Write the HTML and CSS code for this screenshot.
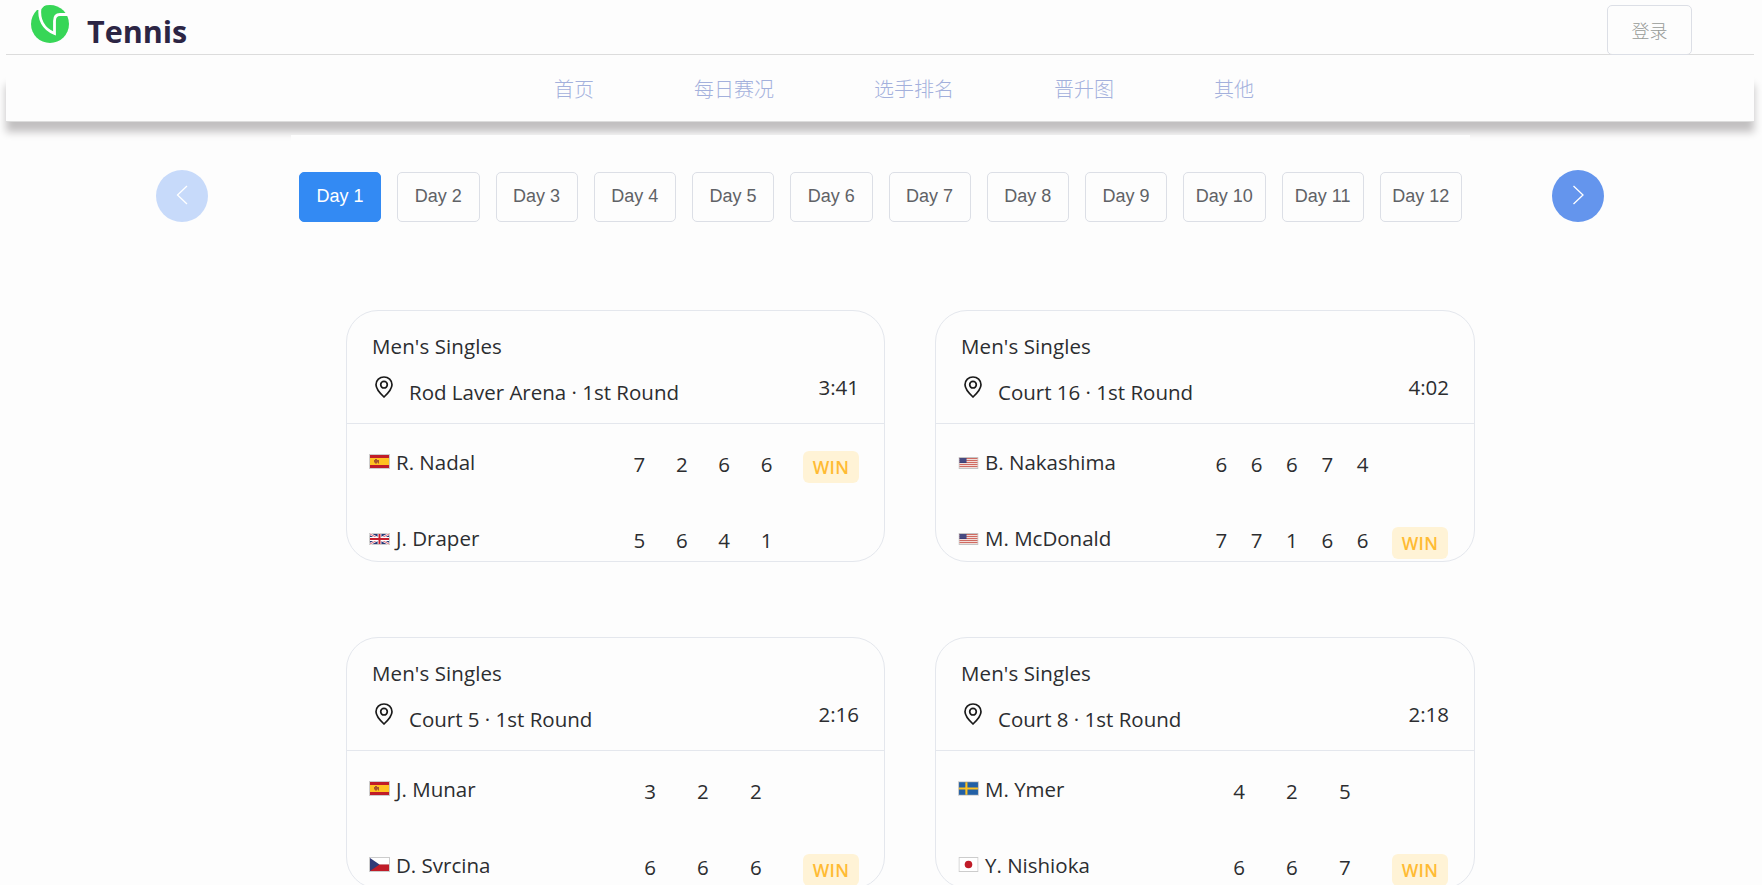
FILE: index.html
```html
<!DOCTYPE html>
<html lang="zh-CN">
<head>
    <meta charset="UTF-8">
    <meta name="viewport" content="width=device-width, initial-scale=1.0">
    <title>Tennis</title>
    <link rel="stylesheet" href="styles.css">
</head>
<body>

    <!-- shared icons and flags -->
    <svg class="sprite" width="0" height="0">
        <symbol id="pin" viewBox="0 0 18 22">
            <path d="M9 1C4.600 1 1 4.400 1 8.700c0 4.600 4.200 8.700 8 12.300 3.800-3.600 8-7.700 8-12.300C17 4.400 13.400 1 9 1z" fill="none" stroke="#1a1a1a" stroke-width="1.700"/>
            <circle cx="9" cy="8.700" r="3.300" fill="none" stroke="#1a1a1a" stroke-width="1.700"/>
        </symbol>
        <symbol id="es" viewBox="0 0 21 15">
            <rect width="21" height="15" fill="#ccc"/>
            <rect x="1" y="1" width="19" height="13" fill="#c01c28"/>
            <rect x="1" y="4" width="19" height="7" fill="#ffc221"/>
            <path d="M5 6h1v-1h2v1h2v3.500h-1v-1h-1v1h-2v-1h-1z" fill="#a8562c"/>
        </symbol>
        <symbol id="gb" viewBox="0 0 21 12">
            <rect width="21" height="12" fill="#ccc"/>
            <rect x="1" y="1" width="19" height="10" fill="#283878"/>
            <path d="M1 1l19 10M20 1L1 11" stroke="#fff" stroke-width="2.200"/>
            <path d="M1 1l19 10M20 1L1 11" stroke="#c8283c" stroke-width=".7"/>
            <path d="M10.500 1v10M1 6h19" stroke="#fff" stroke-width="3.800"/>
            <path d="M10.500 1v10M1 6h19" stroke="#c8202f" stroke-width="2"/>
        </symbol>
        <symbol id="us" viewBox="0 0 20 12">
            <rect width="20" height="12" fill="#c4c4c4"/>
            <rect x="1" y="1" width="18" height="10" fill="#f1dcd8"/>
            <path d="M1 1.500h18M1 3.500h18M1 5.500h18M1 7.500h18M1 9.500h18" stroke="#cf6b62" stroke-width="1"/>
            <rect x="1" y="1" width="7" height="5" fill="#3b3f78"/>
            <path d="M2 2h6M1 4h7" stroke="#8b8fb8" stroke-width=".6" stroke-dasharray="1 1"/>
        </symbol>
        <symbol id="cz" viewBox="0 0 21 15">
            <rect width="21" height="15" fill="#ccc"/>
            <rect x="1" y="1" width="19" height="6.500" fill="#fff"/>
            <rect x="1" y="7.500" width="19" height="6.500" fill="#c01c28"/>
            <path d="M1 1l9.500 6.500L1 14z" fill="#2f3a78"/>
        </symbol>
        <symbol id="se" viewBox="0 0 20 14">
            <rect width="20" height="14" fill="#ccc"/>
            <rect x="1" y="1" width="18" height="12" fill="#2360a5"/>
            <path d="M8 1v12M1 7h18" stroke="#ffc221" stroke-width="2"/>
        </symbol>
        <symbol id="jp" viewBox="0 0 20 15">
            <rect x=".5" y=".5" width="19" height="14" fill="#fff" stroke="#ccc"/>
            <circle cx="10" cy="7.500" r="3.800" fill="#c01c28"/>
        </symbol>
    </svg>

    <header>
        <div class="top-bar">
            <svg class="logo" viewBox="0 0 38 38">
                <circle cx="19" cy="19" r="19" fill="#37d657"/>
                <path d="M6 0H14L9.500 5H6z" fill="#fdfdfd"/>
                <path d="M9 3C7.500 14 12 24 23.500 28.500V16C23.500 11 25.500 9.500 29 9.500H37" fill="none" stroke="#fff" stroke-width="2.800"/>
            </svg>
            <span class="brand">Tennis</span>
            <button class="login">登录</button>
        </div>
        <nav>
            <a>首页</a>
            <a>每日赛况</a>
            <a>选手排名</a>
            <a>晋升图</a>
            <a>其他</a>
        </nav>
    </header>

    <main>
        <div class="day-bar">
            <button class="arrow disabled"><svg viewBox="0 0 20 20"><path d="M15 1L5.500 10l9.500 9"/></svg></button>
            <div class="days">
                <button class="active">Day 1</button>
                <button>Day 2</button>
                <button>Day 3</button>
                <button>Day 4</button>
                <button>Day 5</button>
                <button>Day 6</button>
                <button>Day 7</button>
                <button>Day 8</button>
                <button>Day 9</button>
                <button>Day 10</button>
                <button>Day 11</button>
                <button>Day 12</button>
            </div>
            <button class="arrow"><svg viewBox="0 0 20 20"><path d="M5.500 1L15 10l-9.500 9"/></svg></button>
        </div>

        <div class="matches">
            <section class="card">
                <div class="card-header">
                    <div class="event">Men's Singles</div>
                    <div class="place">
                        <svg class="pin"><use href="#pin"/></svg>
                        <span class="court">Rod Laver Arena · 1st Round</span>
                        <span class="time">3:41</span>
                    </div>
                </div>
                <div class="player">
                    <svg class="flag" viewBox="0 0 21 15"><use href="#es"/></svg>
                    <span class="name">R. Nadal</span>
                    <div class="sets"><span>7</span><span>2</span><span>6</span><span>6</span></div>
                    <span class="win">WIN</span>
                </div>
                <div class="player">
                    <svg class="flag wide" viewBox="0 0 21 12"><use href="#gb"/></svg>
                    <span class="name">J. Draper</span>
                    <div class="sets"><span>5</span><span>6</span><span>4</span><span>1</span></div>
                </div>
            </section>

            <section class="card">
                <div class="card-header">
                    <div class="event">Men's Singles</div>
                    <div class="place">
                        <svg class="pin"><use href="#pin"/></svg>
                        <span class="court">Court 16 · 1st Round</span>
                        <span class="time">4:02</span>
                    </div>
                </div>
                <div class="player">
                    <svg class="flag wide" viewBox="0 0 20 12"><use href="#us"/></svg>
                    <span class="name">B. Nakashima</span>
                    <div class="sets"><span>6</span><span>6</span><span>6</span><span>7</span><span>4</span></div>
                </div>
                <div class="player">
                    <svg class="flag wide" viewBox="0 0 20 12"><use href="#us"/></svg>
                    <span class="name">M. McDonald</span>
                    <div class="sets"><span>7</span><span>7</span><span>1</span><span>6</span><span>6</span></div>
                    <span class="win">WIN</span>
                </div>
            </section>

            <section class="card">
                <div class="card-header">
                    <div class="event">Men's Singles</div>
                    <div class="place">
                        <svg class="pin"><use href="#pin"/></svg>
                        <span class="court">Court 5 · 1st Round</span>
                        <span class="time">2:16</span>
                    </div>
                </div>
                <div class="player">
                    <svg class="flag" viewBox="0 0 21 15"><use href="#es"/></svg>
                    <span class="name">J. Munar</span>
                    <div class="sets"><span>3</span><span>2</span><span>2</span></div>
                </div>
                <div class="player">
                    <svg class="flag" viewBox="0 0 21 15"><use href="#cz"/></svg>
                    <span class="name">D. Svrcina</span>
                    <div class="sets"><span>6</span><span>6</span><span>6</span></div>
                    <span class="win">WIN</span>
                </div>
            </section>

            <section class="card">
                <div class="card-header">
                    <div class="event">Men's Singles</div>
                    <div class="place">
                        <svg class="pin"><use href="#pin"/></svg>
                        <span class="court">Court 8 · 1st Round</span>
                        <span class="time">2:18</span>
                    </div>
                </div>
                <div class="player">
                    <svg class="flag" viewBox="0 0 20 14"><use href="#se"/></svg>
                    <span class="name">M. Ymer</span>
                    <div class="sets"><span>4</span><span>2</span><span>5</span></div>
                </div>
                <div class="player">
                    <svg class="flag" viewBox="0 0 20 15"><use href="#jp"/></svg>
                    <span class="name">Y. Nishioka</span>
                    <div class="sets"><span>6</span><span>6</span><span>7</span></div>
                    <span class="win">WIN</span>
                </div>
            </section>
        </div>
    </main>

</body>
</html>
```
FILE: styles.css
```css
* {
    margin: 0;
    padding: 0;
    box-sizing: border-box;
}

html {
    height: 100%;
    overflow: hidden;
}

body {
    height: 885px;
    overflow: hidden;
    padding: 0 8px 0 6px;
    background-color: #fdfdfd;
    color: #2c2d30;
    font-family: "Open Sans", "Noto Sans CJK SC", sans-serif;
    font-size: 20.5px;
}

.sprite {
    display: block;
}

/* header */
header {
    height: 122px;
}

.top-bar {
    display: flex;
    align-items: flex-start;
    height: 55px;
    padding: 5px 62px 0 25px;
    border-bottom: 1px solid #dcdcdc;
}

.logo {
    width: 38px;
    height: 38px;
}

.brand {
    margin-left: 18px;
    line-height: 53px;
    font-size: 30.5px;
    font-weight: 700;
    color: #2c2544;
}

.login {
    margin-left: auto;
    width: 85px;
    height: 50px;
    border: 1px solid #dcdfe6;
    border-radius: 5px;
    background: none;
    color: #979a97;
    font-family: "Noto Sans CJK SC", sans-serif;
    font-weight: 300;
    font-size: 18px;
}

nav {
    display: flex;
    gap: 100px;
    height: 47px;
    margin-top: 20px;
    padding-left: 548px;
    line-height: 28px;
    background-color: #fdfdfd;
    border-bottom: 1px solid #dcdcdc;
    box-shadow: 0 10px 8px #c2c0c1;
}

nav a {
    color: #a3b0dc;
    font-family: "Noto Sans CJK SC", sans-serif;
    font-weight: 300;
    font-size: 20px;
}

/* day picker */
.day-bar {
    display: flex;
    align-items: center;
    height: 122px;
    margin-top: 13px;
    padding: 0 150px;
}

.days {
    display: flex;
    gap: 16px;
    width: 1179px;
    height: 122px;
    margin: 0 82px 0 83px;
    padding: 37px 8px 35px;
    background-color: #fdfdfd;
}

.days button {
    flex: 1;
    height: 50px;
    padding-bottom: 2px;
    border: 1px solid #dcdfe6;
    border-radius: 5px;
    background: none;
    color: #606266;
    font-family: "Liberation Sans", Arial, sans-serif;
    font-size: 18px;
}

.days .active {
    border-color: #338af3;
    background-color: #338af3;
    color: white;
}

.arrow {
    flex: none;
    width: 52px;
    height: 52px;
    border: none;
    border-radius: 50%;
    background-color: #6495ed;
}

.arrow.disabled {
    background-color: #c7dafa;
}

.arrow svg {
    width: 20px;
    height: 20px;
    fill: none;
    stroke: white;
    stroke-width: 1.3;
}

/* match cards */
.matches {
    display: grid;
    grid-template-columns: 539px 540px;
    gap: 75px 50px;
    margin: 53px 0 0 340px;
}

.card {
    height: 252px;
    border: 1px solid #e4e7ed;
    border-radius: 32px;
    line-height: 30px;
}

.card-header {
    height: 113px;
    padding: 20px 25px 0;
    border-bottom: 1px solid #e4e7ed;
}

.event {
    letter-spacing: 0.1px;
}

.place {
    display: flex;
    align-items: flex-start;
    margin-top: 11px;
}

.pin {
    width: 18px;
    height: 22px;
    margin: 4px 16px 0 3px;
}

.court {
    margin-top: 5px;
}

.time {
    margin-left: auto;
}

.player {
    display: flex;
    align-items: flex-start;
    height: 76px;
    padding: 23px 0 0 22px;
}

.flag {
    width: 21px;
    height: 15px;
    margin: 7px 6px 0 0;
}

.flag.wide {
    height: 12px;
    margin-top: 10px;
}

.name {
    width: 207px;
}

.sets {
    display: flex;
    justify-content: space-evenly;
    width: 200px;
    padding-top: 2px;
}

.win {
    height: 32px;
    width: 56px;
    margin-top: 4px;
    padding-top: 1px;
    border-radius: 6px;
    background-color: #fff3d6;
    color: #ffbb33;
    text-align: center;
    font-weight: 600;
    font-size: 17.5px;
    letter-spacing: 0.3px;
}
```
